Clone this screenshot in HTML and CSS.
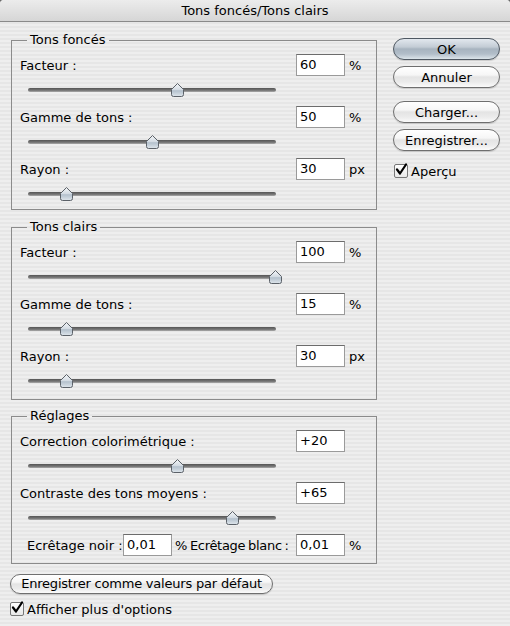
FILE: index.html
```html
<!DOCTYPE html>
<html lang="fr">
<head>
<meta charset="utf-8">
<title>Tons foncés/Tons clairs</title>
<link rel="stylesheet" href="styles.css">
</head>
<body>
<svg class="defs" width="0" height="0" aria-hidden="true">
  <defs>
    <linearGradient id="thumbGrad" x1="0" y1="0" x2="0" y2="1">
      <stop offset="0" stop-color="#f4f6f8"/>
      <stop offset="0.5" stop-color="#d2dae2"/>
      <stop offset="0.55" stop-color="#b3c0cc"/>
      <stop offset="1" stop-color="#dfe6ec"/>
    </linearGradient>
  </defs>
</svg>
<div class="window">
  <div class="titlebar">Tons foncés/Tons clairs</div>
  <div class="content">
    <div class="main">
      <fieldset class="group g1">
        <legend>Tons foncés</legend>
        <div class="row"><span class="label">Facteur :</span><span class="field">60</span><span class="unit">%</span></div>
        <div class="slider"><span class="thumb" style="left:142px"><svg viewBox="0 0 15 16" width="15" height="16"><path d="M7.5 1.5 L13.5 7.5 V12.5 Q13.5 14.5 11.5 14.5 H3.5 Q1.5 14.5 1.5 12.5 V7.5 Z"/></svg></span></div>
        <div class="row"><span class="label">Gamme de tons :</span><span class="field">50</span><span class="unit">%</span></div>
        <div class="slider"><span class="thumb" style="left:117px"><svg viewBox="0 0 15 16" width="15" height="16"><path d="M7.5 1.5 L13.5 7.5 V12.5 Q13.5 14.5 11.5 14.5 H3.5 Q1.5 14.5 1.5 12.5 V7.5 Z"/></svg></span></div>
        <div class="row"><span class="label">Rayon :</span><span class="field">30</span><span class="unit">px</span></div>
        <div class="slider"><span class="thumb" style="left:31px"><svg viewBox="0 0 15 16" width="15" height="16"><path d="M7.5 1.5 L13.5 7.5 V12.5 Q13.5 14.5 11.5 14.5 H3.5 Q1.5 14.5 1.5 12.5 V7.5 Z"/></svg></span></div>
      </fieldset>

      <fieldset class="group g2">
        <legend>Tons clairs</legend>
        <div class="row"><span class="label">Facteur :</span><span class="field">100</span><span class="unit">%</span></div>
        <div class="slider"><span class="thumb" style="left:240px"><svg viewBox="0 0 15 16" width="15" height="16"><path d="M7.5 1.5 L13.5 7.5 V12.5 Q13.5 14.5 11.5 14.5 H3.5 Q1.5 14.5 1.5 12.5 V7.5 Z"/></svg></span></div>
        <div class="row"><span class="label">Gamme de tons :</span><span class="field">15</span><span class="unit">%</span></div>
        <div class="slider"><span class="thumb" style="left:31px"><svg viewBox="0 0 15 16" width="15" height="16"><path d="M7.5 1.5 L13.5 7.5 V12.5 Q13.5 14.5 11.5 14.5 H3.5 Q1.5 14.5 1.5 12.5 V7.5 Z"/></svg></span></div>
        <div class="row"><span class="label">Rayon :</span><span class="field">30</span><span class="unit">px</span></div>
        <div class="slider"><span class="thumb" style="left:31px"><svg viewBox="0 0 15 16" width="15" height="16"><path d="M7.5 1.5 L13.5 7.5 V12.5 Q13.5 14.5 11.5 14.5 H3.5 Q1.5 14.5 1.5 12.5 V7.5 Z"/></svg></span></div>
      </fieldset>

      <fieldset class="group g3">
        <legend>Réglages</legend>
        <div class="row"><span class="label">Correction colorimétrique :</span><span class="field">+20</span></div>
        <div class="slider"><span class="thumb" style="left:142px"><svg viewBox="0 0 15 16" width="15" height="16"><path d="M7.5 1.5 L13.5 7.5 V12.5 Q13.5 14.5 11.5 14.5 H3.5 Q1.5 14.5 1.5 12.5 V7.5 Z"/></svg></span></div>
        <div class="row"><span class="label">Contraste des tons moyens :</span><span class="field">+65</span></div>
        <div class="slider"><span class="thumb" style="left:197px"><svg viewBox="0 0 15 16" width="15" height="16"><path d="M7.5 1.5 L13.5 7.5 V12.5 Q13.5 14.5 11.5 14.5 H3.5 Q1.5 14.5 1.5 12.5 V7.5 Z"/></svg></span></div>
        <div class="row clip">
          <span class="clip-label">Ecrêtage noir :</span><span class="field">0,01</span><span class="clip-mid">% Ecrêtage blanc :</span><span class="field">0,01</span><span class="unit">%</span>
        </div>
      </fieldset>

      <button class="btn btn-wide" type="button">Enregistrer comme valeurs par défaut</button>
      <label class="check check-bottom"><span class="box"><svg viewBox="0 0 14 14" width="14" height="14"><path d="M3 6.5 L6 10.5 L12 1.5"/></svg></span>Afficher plus d'options</label>
    </div>

    <div class="side">
      <button class="btn btn-default" type="button">OK</button>
      <button class="btn" type="button">Annuler</button>
      <button class="btn btn-sep" type="button">Charger...</button>
      <button class="btn" type="button">Enregistrer...</button>
      <label class="check check-side"><span class="box"><svg viewBox="0 0 14 14" width="14" height="14"><path d="M3 6.5 L6 10.5 L12 1.5"/></svg></span>Aperçu</label>
    </div>
  </div>
</div>
</body>
</html>
```

FILE: styles.css
```css
html {
  background: #6a6a6a;
}
body {
  margin: 0;
  width: 510px;
  height: 626px;
  overflow: hidden;
  font-family: "DejaVu Sans", "Liberation Sans", sans-serif;
  font-size: 13px;
  color: #000;
}
.defs {
  position: absolute;
  width: 0;
  height: 0;
}
.window {
  width: 510px;
  height: 626px;
  border-radius: 4px 4px 0 0;
  overflow: hidden;
  background: repeating-linear-gradient(to bottom, #eeeeee 0 2px, #e6e6e6 2px 4px);
}
.titlebar {
  height: 21px;
  line-height: 22px;
  text-align: center;
  border-bottom: 1px solid #8a8a8a;
  background: linear-gradient(to bottom, #ececec, #d6d6d6);
  box-sizing: content-box;
}
.content {
  display: flex;
  padding: 10px 0 0 11px;
}
.main {
  width: 366px;
  display: flex;
  flex-direction: column;
}
.group {
  margin: 0;
  padding: 6px 0 7px 8px;
  border: 1px solid #8b8b8b;
  box-sizing: border-box;
  width: 366px;
  min-width: 0;
}
.group legend {
  padding: 0 3px;
  margin-left: 7px;
  line-height: 16px;
}
.g2 {
  margin-top: 9px;
  padding-bottom: 10px;
}
.g3 {
  margin-top: 8px;
}
.row {
  display: flex;
  align-items: center;
  height: 22px;
}
.label {
  flex: 0 0 276px;
}
.field {
  flex: none;
  box-sizing: border-box;
  width: 49px;
  height: 22px;
  line-height: 20px;
  padding-left: 3px;
  background: #fff;
  border: 1px solid #9a9a9a;
  border-top-color: #6c6c6c;
  white-space: nowrap;
}
.unit {
  margin-left: 4px;
}
.slider {
  position: relative;
  width: 248px;
  height: 16px;
  margin: 6px 0 8px 8px;
}
.group .slider:last-child {
  margin-bottom: 0;
}
.slider::before {
  content: "";
  position: absolute;
  left: 0;
  right: 0;
  top: 6px;
  height: 4px;
  border-radius: 2px;
  background: linear-gradient(to bottom, #555555, #777777 60%, #acacac);
}
.thumb {
  position: absolute;
  top: 0;
  width: 15px;
  height: 16px;
}
.thumb svg {
  display: block;
}
.thumb path {
  fill: url(#thumbGrad);
  stroke: #5b6168;
  stroke-width: 1;
}
.clip {
  padding-left: 7px;
}
.clip-label {
  flex: 0 0 96px;
  white-space: nowrap;
}
.clip-mid {
  margin-left: 3px;
  flex: 0 0 121px;
  white-space: nowrap;
  letter-spacing: -0.3px;
  word-spacing: -1px;
}
.btn {
  display: block;
  font-family: "DejaVu Sans", "Liberation Sans", sans-serif;
  font-size: 13px;
  color: #000;
  height: 22px;
  padding: 0;
  border: 1px solid #6f6f6f;
  border-radius: 11px;
  background: linear-gradient(to bottom, #ffffff 0%, #f6f6f6 40%, #e4e4e4 50%, #ebebeb 75%, #fbfbfb 100%);
  box-shadow: 0 1px 1px rgba(0,0,0,0.15);
  line-height: 19px;
  text-align: center;
}
.side {
  margin-left: 16px;
  width: 107px;
  padding-top: 6px;
  display: flex;
  flex-direction: column;
}
.side .btn {
  width: 107px;
  margin-bottom: 6px;
}
.side .btn-sep {
  margin-top: 7px;
}
.btn-default {
  border-color: #4f5862;
  background: linear-gradient(to bottom, #e2e8ee 0%, #c3ccd5 40%, #a7b3bf 50%, #b2bec9 75%, #dce4ea 100%);
}
.btn-wide {
  width: 263px;
  height: 20px;
  line-height: 18px;
  border-radius: 10px;
  margin-top: 10px;
  margin-left: -1px;
  letter-spacing: -0.2px;
}
.check {
  display: flex;
  align-items: center;
  gap: 3px;
  height: 16px;
}
.box {
  width: 14px;
  height: 14px;
  box-sizing: border-box;
  border: 1px solid #777;
  border-radius: 2px;
  background: linear-gradient(to bottom, #ffffff, #e8e8e8);
  position: relative;
}
.box svg {
  position: absolute;
  left: -1px;
  top: -2px;
}
.box path {
  fill: none;
  stroke: #000;
  stroke-width: 2.2;
  stroke-linecap: round;
  stroke-linejoin: round;
}
.check-side {
  margin-top: 6px;
  margin-left: 1px;
}
.check-bottom {
  margin-top: 7px;
  margin-left: -1px;
}
```
